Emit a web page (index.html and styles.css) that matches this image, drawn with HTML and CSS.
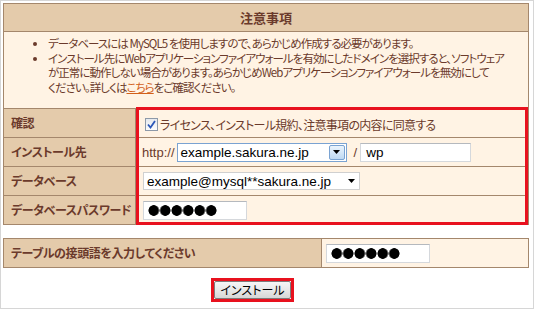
FILE: index.html
```html
<!DOCTYPE html>
<html lang="ja">
<head>
    <meta charset="UTF-8">
    <title>インストール</title>
    <link rel="stylesheet" href="styles.css">
</head>
<body>
    <div class="frame">
        <div class="install">
            <table class="form-table">
                <colgroup>
                    <col class="label-col">
                    <col>
                </colgroup>
                <tr class="head">
                    <th colspan="2">注意事項</th>
                </tr>
                <tr>
                    <td colspan="2" class="notes">
                        <ul>
                            <li>データベースには MySQL5 を使用しますので、あらかじめ作成する必要があります。</li>
                            <li>インストール先にWebアプリケーションファイアウォールを有効にしたドメインを選択すると、ソフトウェア<br>が正常に動作しない場合があります。あらかじめWebアプリケーションファイアウォールを無効にして<br>ください。詳しくは<a href="#">こちら</a>をご確認ください。</li>
                        </ul>
                    </td>
                </tr>
                <tr>
                    <th>確認</th>
                    <td>
                        <label class="field agree">
                            <span class="checkbox">
                                <svg width="9" height="9" viewBox="0 0 9 9"><path d="M1 4.5 L3.5 7.5 L8 1" fill="none" stroke="#2a56b8" stroke-width="1.8"/></svg>
                            </span>
                            ライセンス、インストール規約、注意事項の内容に同意する
                        </label>
                    </td>
                </tr>
                <tr>
                    <th>インストール先</th>
                    <td>
                        <div class="field">
                            <span class="scheme">http://</span>
                            <span class="select select-host">
                                <span class="select-value">example.sakura.ne.jp</span>
                                <span class="select-btn">
                                    <svg width="7" height="4" viewBox="0 0 7 4"><path d="M0 0 H7 L3.5 4 Z" fill="#000"/></svg>
                                </span>
                            </span>
                            <span class="slash">/</span>
                            <span class="text-input dir-input">wp</span>
                        </div>
                    </td>
                </tr>
                <tr>
                    <th>データベース</th>
                    <td>
                        <div class="field">
                            <span class="select select-db">
                                <span class="select-value">example@mysql**sakura.ne.jp</span>
                                <span class="select-arrow">
                                    <svg width="7" height="4" viewBox="0 0 7 4"><path d="M0 0 H7 L3.5 4 Z" fill="#000"/></svg>
                                </span>
                            </span>
                        </div>
                    </td>
                </tr>
                <tr>
                    <th>データベースパスワード</th>
                    <td>
                        <div class="field">
                            <span class="text-input pass-input"><span class="dots"></span></span>
                        </div>
                    </td>
                </tr>
            </table>
            <div class="mark-box"></div>

            <table class="form-table prefix-table">
                <colgroup>
                    <col class="prefix-col">
                    <col>
                </colgroup>
                <tr>
                    <th>テーブルの接頭語を入力してください</th>
                    <td>
                        <div class="field">
                            <span class="text-input pass-input"><span class="dots"></span></span>
                        </div>
                    </td>
                </tr>
            </table>

            <div class="actions">
                <span class="mark-button"><button type="button">インストール</button></span>
            </div>
        </div>
    </div>
</body>
</html>
```

FILE: styles.css
```css
body {
    margin: 0;
    font-family: "Noto Sans CJK JP", sans-serif;
    color: #6b3a2b;
    background: #fff;
}
.frame {
    width: 534px;
    height: 309px;
    box-sizing: border-box;
    border: 1px solid #d6d6d6;
    padding: 2px 0 0 2px;
}
.install {
    position: relative;
    width: 526px;
}
.form-table {
    width: 526px;
    table-layout: fixed;
    border-collapse: collapse;
    font-size: 12px;
    font-feature-settings: "palt";
}
.form-table th,
.form-table td {
    border: 1px solid #a4876c;
    padding: 0;
}
.form-table th {
    background: #e4cbab;
    text-align: left;
    font-weight: bold;
    padding-left: 7px;
    height: 28px;
    line-height: 14px;
    letter-spacing: -0.4px;
    white-space: nowrap;
}
.form-table td {
    background: #fff3e4;
}
.label-col {
    width: 132px;
}
.prefix-col {
    width: 318px;
}
.head th {
    text-align: center;
    font-size: 13px;
    height: 27px;
    padding: 0;
    letter-spacing: 0;
}
.notes {
    height: 76px;
    vertical-align: top;
    white-space: nowrap;
}
.notes ul {
    margin: 0;
    padding: 4px 0 0 44px;
    font-size: 11.5px;
    letter-spacing: -0.95px;
    line-height: 14.5px;
}
.notes a {
    color: #d2601a;
}
.field {
    display: flex;
    align-items: center;
    padding-left: 7px;
}
.agree {
    gap: 2px;
    padding-top: 3px;
    letter-spacing: -0.7px;
}
.checkbox {
    width: 11px;
    height: 11px;
    border: 1px solid #8d99a8;
    background: linear-gradient(#e6e9ee, #fbfbfc);
    display: flex;
    align-items: center;
    justify-content: center;
    margin-left: 2px;
}
.scheme {
    font-family: "Liberation Sans", Arial, sans-serif;
    font-size: 13px;
    margin-left: -1px;
    margin-right: 2px;
}
.select {
    display: inline-flex;
    align-items: center;
    height: 19px;
    box-sizing: border-box;
    background: #fff;
    font-family: "Liberation Sans", Arial, sans-serif;
    font-size: 13.5px;
    color: #000;
}
.select-value {
    flex: 1;
    padding-left: 3px;
}
.select-host {
    width: 170px;
    border: 1px solid #7aa3d2;
}
.select-btn {
    align-self: stretch;
    width: 14px;
    margin: 1px;
    border: 1px solid #7aa3d2;
    border-radius: 2px;
    background: linear-gradient(#eaf4fd, #bfd9f2);
    display: flex;
    align-items: center;
    justify-content: center;
}
.select-db {
    width: 217px;
    height: 18px;
    border: 1px solid #d0d0d0;
}
.select-arrow {
    width: 16px;
    display: flex;
    justify-content: center;
}
.slash {
    font-family: "Liberation Sans", Arial, sans-serif;
    font-size: 13px;
    margin: 0 3px 0 7px;
}
.text-input {
    display: inline-block;
    height: 19px;
    box-sizing: border-box;
    border: 1px solid #d5d8dc;
    border-top-color: #b5b9be;
    background: #fff;
    font-family: "Liberation Sans", Arial, sans-serif;
    font-size: 13.5px;
    color: #000;
    line-height: 17px;
}
.dir-input {
    width: 111px;
    padding-left: 5px;
}
.pass-input {
    width: 104px;
    padding: 3px 0 0 4px;
}
.dots {
    display: block;
    width: 69px;
    height: 11px;
    background: radial-gradient(circle, #000 5px, transparent 5.6px) 0 0 / 11.5px 11px repeat-x;
}
.mark-box {
    position: absolute;
    left: 133px;
    top: 104px;
    width: 392px;
    height: 118px;
    box-sizing: border-box;
    border: 3px solid #e8111e;
}
.prefix-table {
    margin-top: 13px;
}
.prefix-table th {
    height: 28px;
}
.prefix-table .field {
    padding-left: 4px;
}
.actions {
    display: flex;
    justify-content: center;
    padding: 10px 27px 0 0;
}
.mark-button {
    border: 3px solid #e8111e;
    display: flex;
}
.mark-button button {
    width: 77px;
    height: 18px;
    padding: 0;
    border: 1px solid #7c7c7c;
    border-radius: 2px;
    background: linear-gradient(#f6f6f6 0%, #e8e8e8 50%, #d6d6d6 100%);
    font-family: "Noto Sans CJK JP", sans-serif;
    font-feature-settings: "palt";
    font-size: 12px;
    line-height: 14px;
    color: #000;
}
```
